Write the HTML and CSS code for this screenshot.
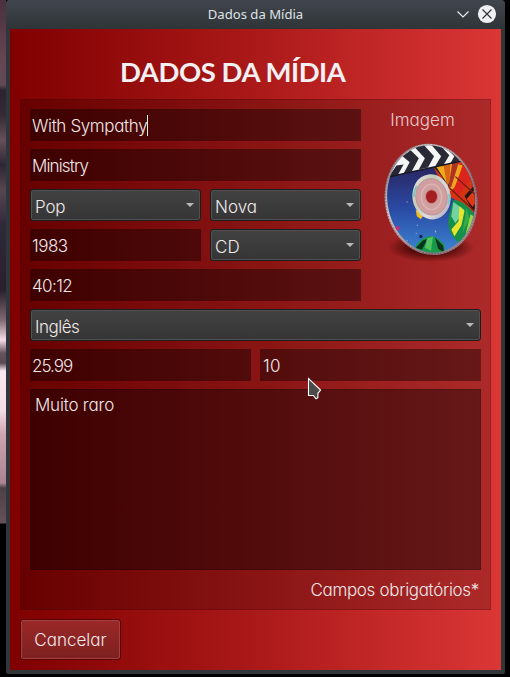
FILE: index.html
```html
<!DOCTYPE html>
<html lang="pt">
<head>
<meta charset="utf-8">
<title>Dados da Mídia</title>
<link rel="stylesheet" href="styles.css">
</head>
<body>
<div class="window">
  <header class="titlebar">
    <span class="caption">Dados da Mídia</span>
    <svg class="controls" width="44" height="20" viewBox="0 0 44 20" fill="none">
      <path d="M3.500 7.500 9 13l5.500-5.500" stroke="#e9ecee" stroke-width="1.200"/>
      <circle cx="33" cy="10" r="9.100" fill="#eff0f1"/>
      <path d="m28.500 5.500 9 9m0-9-9 9" stroke="#31363b" stroke-width="1.200"/>
    </svg>
  </header>
  <main class="content">
    <h1 class="heading">DADOS DA MÍDIA</h1>
    <section class="panel">
      <div class="top">
        <div class="fields">
          <div class="field"><span class="t-title">With Sympathy</span><i class="caret"></i></div>
          <div class="field"><span class="t-artist">Ministry</span></div>
          <div class="pair">
            <div class="select"><span class="t-pop">Pop</span><b class="arrow"></b></div>
            <div class="select"><span class="t-nova">Nova</span><b class="arrow"></b></div>
          </div>
          <div class="pair">
            <div class="field year"><span class="t-year">1983</span></div>
            <div class="select"><span class="t-cd">CD</span><b class="arrow"></b></div>
          </div>
          <div class="field"><span class="t-time">40:12</span></div>
        </div>
        <div class="cover">
          <span class="t-image">Imagem</span>
          <svg class="disc" width="112" height="132" viewBox="0 0 110 130">
            <defs>
              <linearGradient id="sky" x1="0" y1="0" x2="0" y2="1">
                <stop offset=".2" stop-color="#29235f"/><stop offset=".55" stop-color="#2a4ca6"/><stop offset=".9" stop-color="#3d8bd6"/>
              </linearGradient>
              <linearGradient id="rim" x1="0" y1="0" x2="1" y2="1">
                <stop offset="0" stop-color="#65595d"/><stop offset=".3" stop-color="#d2c4c7"/><stop offset=".7" stop-color="#8b7378"/><stop offset="1" stop-color="#bba6aa"/>
              </linearGradient>
              <linearGradient id="hub" x1="0" y1="0" x2="1" y2="1">
                <stop offset="0" stop-color="#eee7e9"/><stop offset=".35" stop-color="#c4cbb5"/><stop offset=".6" stop-color="#dedce3"/><stop offset="1" stop-color="#a9a4b5"/>
              </linearGradient>
              <radialGradient id="shade"><stop offset=".4" stop-color="#350000" stop-opacity=".8"/><stop offset="1" stop-color="#350000" stop-opacity="0"/></radialGradient>
              <clipPath id="face"><ellipse cx="55" cy="60" rx="43" ry="53" transform="rotate(-8 55 60)"/></clipPath>
            </defs>
            <ellipse cx="55" cy="108" rx="43" ry="14" fill="url(#shade)"/>
            <ellipse cx="55" cy="60.500" rx="45.500" ry="55" transform="rotate(-8 55 60)" fill="url(#rim)"/>
            <ellipse cx="55" cy="60" rx="45" ry="54.500" transform="rotate(-8 55 60)" fill="none" stroke="#5b3c43" stroke-width=".6" stroke-dasharray="1.500 1.500"/>
            <g clip-path="url(#face)">
              <path d="M0 0h110v130H0z" fill="url(#sky)"/>
              <path d="M56 26 84 20 108 28v53L98 74 85 64 72 57Z" fill="#d53413"/>
              <path d="m56 27 13-3 6 14-4 16-5-16Z" fill="#252330"/>
              <path d="m60 28 8-3 4 12-1 8Z" fill="#f4a916"/>
              <path d="m67 25 8-2-1 19-3 6Z" fill="#d76716"/>
              <path d="m74 24 12 3-7 21-6 5Z" fill="#f2a41c"/>
              <path d="m76 24 6 1-7 23-3 2Z" fill="#ad3325"/>
              <path d="m87 27 9 10-13 19-7-2Z" fill="#db241c"/>
              <path d="m98 46 6 32-9-8-7-13Z" fill="#271413"/>
              <path d="m90 60 8-9 3 9-5 8Z" fill="#e03b18"/>
              <path d="m73 49 25 23M79 38l22 20" stroke="#701d16" stroke-width="1.200"/>
              <path d="M77 61q9-1 22 15v17q-6 11-18 9-12-10-8-27Z" fill="#168f4a"/>
              <path d="m77 63 11 8-9 13-4-7Z" fill="#70d3a1"/>
              <path d="m83 67 5 5-3 14-7 11-3-7 7-8Z" fill="#e6e42c"/>
              <path d="m90 69 3 11-7 13Z" fill="#36ad46"/>
              <path d="m94 75-5 20 9-7V78Z" fill="#9bd54b"/>
              <path d="M40 106q14-18 28-1l2 15H38Z" fill="#179949"/>
              <path d="m47 101 5-2-6 11-6-2ZM59 98l8 8 1 7-6-4Z" fill="#08331e"/>
              <path d="m51 99 6-2-2 14-6-3Z" fill="#54c463"/>
              <path d="m40 71 4 1 3 5-2 3-4-3Z" fill="#efbb20"/>
              <circle cx="22" cy="89" r="2.300" fill="#be2f79"/>
              <circle cx="45" cy="97" r="1.700" fill="#17265b"/>
              <path d="M31 63h1m9 23h1m17 5 1 2m-20 1h1m-10 7h1" stroke="#a4a6c8" stroke-width="1.200"/>
              <path d="m5 40 8-32L53-5l45 27-14 1Z" fill="#f5f5f5"/>
              <path d="m27 18 8-6 8 8-7 13-8 2 6-11Zm12-9 9-2 10 11-6 11-9 2 6-11Zm15-4 9 1 10 11-6 10-8 1 6-10Zm14 3 8 2 11 8-5 5-8 2 4-7Z" fill="#292a36"/>
              <path d="m13 39 8-12 7-1-6 11Z" fill="#262733"/>
              <path d="m10 39 74-16 7-1" fill="none" stroke="#171824" stroke-width="1.500"/>
            </g>
            <ellipse cx="55.500" cy="58" rx="18.800" ry="22.300" transform="rotate(-8 55 58)" fill="url(#hub)"/>
            <path d="M38 58q0-6 3-11M72 65q2-5 1-10" fill="none" stroke="#7dcac5" stroke-width="2"/>
            <ellipse cx="55.500" cy="58" rx="15.500" ry="18" transform="rotate(-8 55 58)" fill="#d0a0a0" stroke="#b68b8f" stroke-width=".7"/>
            <ellipse cx="55.500" cy="58" rx="10" ry="12.500" fill="none" stroke="#dfb6b8" stroke-width="1.200"/>
            <ellipse cx="55.500" cy="57.700" rx="6" ry="6.800" fill="#a51f22" stroke="#c58c90" stroke-width="1"/>
          </svg>
        </div>
      </div>
      <div class="select"><span class="t-lang">Inglês</span><b class="arrow"></b></div>
      <div class="prices">
        <div class="field"><span class="t-price">25.99</span></div>
        <div class="field"><span class="t-count">10</span></div>
      </div>
      <div class="notes"><span class="t-notes">Muito raro</span></div>
      <div class="required"><span class="t-required">Campos obrigatórios*</span></div>
    </section>
    <button class="cancel"><span class="t-cancel">Cancelar</span></button>
  </main>
</div>
<svg class="pointer" width="16" height="24" viewBox="0 0 16 24"><path d="M1.500 1.500v17h4.800l2.700 3.300 1.900-1.200v-4.300l2.700-3.300Z" fill="#4b4b4b" stroke="#fff" stroke-width="1.100"/></svg>
</body>
</html>
```
FILE: styles.css
```css
* { box-sizing: border-box; }
body {
  margin: 0;
  height: 677px;
  overflow: hidden;
  background: linear-gradient(#49313d 0, #654653 60px, #604a54 85px, #2c2330 90px, #352a36 115px, #655059 140px, #2d2735 165px, #564650 190px, #30293a 225px, #28202c 290px, #806873 320px, #f4dce6 340px, #65535e 353px, #594955 363px, #fae8f0 371px, #f5dce5 410px, #cca3af 435px, #a98491 483px, #4c4046 488px, #665158 523px, #000 524px) 0 0 / 6px 100% no-repeat #000;
  font-family: Inter, "Liberation Sans", sans-serif;
  font-feature-settings: "cv11";
  font-size: 17px;
  font-weight: 300;
  color: #f0e9e9;
}
span { white-space: nowrap; }
.window {
  width: 499px;
  height: 674px;
  margin-left: 6px;
  padding: 0 4px 4px;
  border-radius: 4px 4px 2px 2px;
  background: #31363b;
}
.titlebar {
  height: 29px;
  margin: 0 -4px;
  padding: 0 7px 0 9px;
  border-radius: 4px 4px 0 0;
  background: linear-gradient(#41464e, #2e3437);
  display: grid;
  grid-template-columns: 44px 1fr 44px;
  align-items: center;
}
.caption {
  grid-column: 2;
  text-align: center;
  font: 400 13.1px "Noto Sans", sans-serif;
  color: #dfe2e4;
  padding: 0 2px 1px 0;
}
.controls { margin-bottom: 1px; }
.content {
  height: 641px;
  padding: 0 10px;
  background: linear-gradient(90deg, #800000, #ab1919 50%, #db3636);
}
.heading {
  margin: 0;
  height: 70px;
  padding: 24px 0 0 100px;
  font: 700 27.5px/38px Lato, sans-serif;
  letter-spacing: -.45px;
  color: #f2f0f2;
}
.panel {
  height: 511px;
  padding: 9px;
  border: 1px solid rgba(40, 0, 0, .4);
  background: rgba(0, 0, 0, .2);
  background-clip: padding-box;
  display: flex;
  flex-direction: column;
  gap: 8px;
}
.panel > * { flex: none; }
.top { display: flex; height: 192px; }
.fields { width: 331px; display: grid; gap: 8px; }
.pair { display: grid; grid-template-columns: 171px 151px; gap: 9px; }
.prices { display: grid; grid-template-columns: 1fr 1fr; gap: 9px; }
.field {
  height: 32px;
  padding: 2px 2px 0;
  background: rgba(0, 0, 0, .4);
  display: flex;
  align-items: center;
}
.select {
  height: 32px;
  padding: 3px 5px 0 4px;
  border: 1px solid #1d1d1d;
  border-radius: 3px;
  background: linear-gradient(#424242, #353535);
  box-shadow: inset 0 0 0 1px #505050;
  display: flex;
  align-items: center;
  justify-content: space-between;
}
.arrow {
  margin: 0 1px 3px 0;
  border: 4.500px solid transparent;
  border-top-color: #b9b9b9;
  border-bottom: 0;
}
.caret { width: 1px; height: 21px; margin-bottom: 2px; background: #c8f4f1; }
.cover { width: 120px; display: flex; flex-direction: column; align-items: center; }
.cover span { height: 29px; line-height: 23px; color: #e7cbcc; padding-left: 3px; }
.disc { display: block; margin-left: 19px; flex: none; }
.t-title { letter-spacing: -.37px; }
.t-artist { letter-spacing: -.85px; }
.t-pop { letter-spacing: -.2px; }
.t-year { letter-spacing: -.5px; }
.t-time { letter-spacing: -.6px; }
.t-lang { letter-spacing: -.5px; }
.t-price { letter-spacing: -1px; }
.t-count { letter-spacing: .2px; padding-left: 1px; }
.t-notes { letter-spacing: -.2px; }
.t-required { letter-spacing: -.32px; }
.notes {
  height: 181px;
  padding: 4px;
  line-height: 22px;
  border: 1px solid rgba(0, 0, 0, .5);
  background: rgba(0, 0, 0, .4);
  background-clip: padding-box;
}
.required { height: 22px; display: flex; justify-content: flex-end; padding-right: 2px; line-height: 24px; }
.cancel {
  display: block;
  width: 101px;
  height: 41px;
  margin: 9px 0 0;
  padding: 1px 0 0;
  border: 1px solid #560000;
  border-radius: 3px;
  background: linear-gradient(#9b2828, #7d2020);
  box-shadow: inset 0 0 0 1px #a84040;
  font: inherit;
  font-feature-settings: inherit;
  color: inherit;
}
.pointer { position: absolute; left: 307px; top: 377px; }
```
